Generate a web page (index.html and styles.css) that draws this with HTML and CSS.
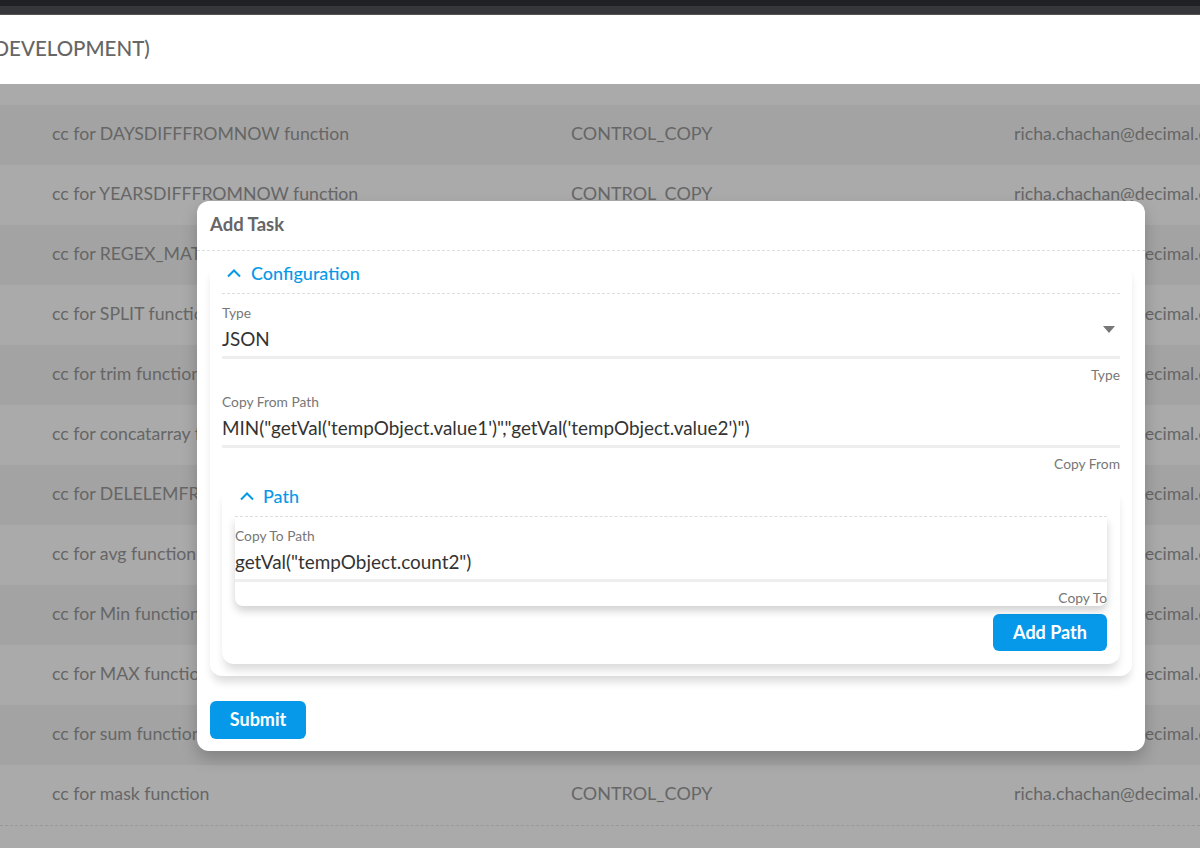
FILE: index.html
```html
<!DOCTYPE html>
<html lang="en">
<head>
  <meta charset="UTF-8">
  <title>Tasks</title>
  <link rel="stylesheet" href="styles.css">
</head>
<body>

<div class="top-bar"></div>
<div class="page-title">(DEVELOPMENT)</div>

<div class="task-table">
  <div class="task-row"><span class="col-name">cc for DAYSDIFFFROMNOW function</span><span class="col-type">CONTROL_COPY</span><span class="col-owner">richa.chachan@decimal.com</span></div>
  <div class="task-row"><span class="col-name">cc for YEARSDIFFFROMNOW function</span><span class="col-type">CONTROL_COPY</span><span class="col-owner">richa.chachan@decimal.com</span></div>
  <div class="task-row"><span class="col-name">cc for REGEX_MATCH function</span><span class="col-type">CONTROL_COPY</span><span class="col-owner">richa.chachan@decimal.com</span></div>
  <div class="task-row"><span class="col-name">cc for SPLIT function</span><span class="col-type">CONTROL_COPY</span><span class="col-owner">richa.chachan@decimal.com</span></div>
  <div class="task-row"><span class="col-name">cc for trim function</span><span class="col-type">CONTROL_COPY</span><span class="col-owner">richa.chachan@decimal.com</span></div>
  <div class="task-row"><span class="col-name">cc for concatarray function</span><span class="col-type">CONTROL_COPY</span><span class="col-owner">richa.chachan@decimal.com</span></div>
  <div class="task-row"><span class="col-name">cc for DELELEMFROMARRAY function</span><span class="col-type">CONTROL_COPY</span><span class="col-owner">richa.chachan@decimal.com</span></div>
  <div class="task-row"><span class="col-name">cc for avg function</span><span class="col-type">CONTROL_COPY</span><span class="col-owner">richa.chachan@decimal.com</span></div>
  <div class="task-row"><span class="col-name">cc for Min function</span><span class="col-type">CONTROL_COPY</span><span class="col-owner">richa.chachan@decimal.com</span></div>
  <div class="task-row"><span class="col-name">cc for MAX function</span><span class="col-type">CONTROL_COPY</span><span class="col-owner">richa.chachan@decimal.com</span></div>
  <div class="task-row"><span class="col-name">cc for sum function</span><span class="col-type">CONTROL_COPY</span><span class="col-owner">richa.chachan@decimal.com</span></div>
  <div class="task-row"><span class="col-name">cc for mask function</span><span class="col-type">CONTROL_COPY</span><span class="col-owner">richa.chachan@decimal.com</span></div>
</div>

<div class="modal">
  <div class="modal-title">Add Task</div>
  <div class="modal-body">
    <div class="panel">
      <div class="panel-head">
        <svg class="chevron" width="16" height="10" viewBox="0 0 16 10"><path d="M2 8.5 8 2.5l6 6" fill="none" stroke="currentColor" stroke-width="2"/></svg>
        <span>Configuration</span>
      </div>
      <div class="field">
        <label>Type</label>
        <div class="field-value">JSON<span class="caret"></span></div>
        <div class="helper">Type</div>
      </div>
      <div class="field">
        <label>Copy From Path</label>
        <div class="field-value">MIN("getVal('tempObject.value1')","getVal('tempObject.value2')")</div>
        <div class="helper">Copy From</div>
      </div>

      <div class="panel panel-nested">
        <div class="panel-head">
          <svg class="chevron" width="16" height="10" viewBox="0 0 16 10"><path d="M2 8.5 8 2.5l6 6" fill="none" stroke="currentColor" stroke-width="2"/></svg>
          <span>Path</span>
        </div>
        <div class="path-item">
          <div class="field">
            <label>Copy To Path</label>
            <div class="field-value">getVal("tempObject.count2")</div>
            <div class="helper">Copy To</div>
          </div>
        </div>
        <div class="panel-actions">
          <button class="btn btn-add">Add Path</button>
        </div>
      </div>
    </div>
    <button class="btn btn-submit">Submit</button>
  </div>
</div>

</body>
</html>
```

FILE: styles.css
```css
* {
  box-sizing: border-box;
  margin: 0;
  padding: 0;
}

body {
  font-family: Lato, "Open Sans", sans-serif;
  background: #aaa;
  height: 848px;
  overflow: hidden;
  position: relative;
}

.top-bar {
  height: 15px;
  background: #36373a;
  border-top: 6px solid #202124;
  border-bottom: 1px solid #555;
}

.page-title {
  height: 69px;
  background: #fff;
  color: #666;
  font-size: 20.5px;
  font-weight: 500;
  line-height: 67px;
  margin-left: -12px;
  white-space: nowrap;
}

.task-table {
  padding-top: 21px;
  border-bottom: 1px dashed #999;
  height: 742px;
}

.task-row {
  height: 60px;
  display: flex;
  align-items: center;
  padding-bottom: 4px;
  color: #666;
  font-size: 17.7px;
  white-space: nowrap;
  background: #aaa;
}

.task-row:nth-child(odd) {
  background: #a3a3a3;
}

.col-name {
  flex: none;
  width: 571px;
  padding-left: 52px;
}

.col-type {
  flex: none;
  width: 443px;
  font-size: 18px;
}

.col-owner {
  flex: none;
}

/* dialog on top of the dimmed table */
.modal {
  position: absolute;
  left: 197px;
  top: 201px;
  width: 948px;
  height: 550px;
  background: #fff;
  border-radius: 12px;
  box-shadow: 0 8px 16px rgba(0, 0, 0, 0.2);
}

.modal-title {
  height: 50px;
  padding-left: 13px;
  border-bottom: 1px dashed #ddd;
  color: #666;
  font-size: 18.5px;
  font-weight: 700;
  line-height: 46px;
}

.modal-body {
  padding: 11px 13px 0;
}

.panel {
  background: #fff;
  padding: 0 12px 12px;
  border-radius: 12px;
  box-shadow: 0 8px 8px -2px rgba(0, 0, 0, 0.14);
  height: 414px;
}

.panel-nested {
  height: 178px;
  padding: 0 13px 0;
  margin-top: 14px;
}

.panel-head {
  height: 32px;
  display: flex;
  align-items: center;
  gap: 9px;
  padding: 0 0 10px 4px;
  border-bottom: 1px dashed #ddd;
  color: #0799e9;
  font-size: 18px;
  font-weight: 500;
}

.panel-nested .panel-head {
  height: 31px;
  gap: 8px;
  padding-bottom: 10px;
}

.field {
  display: flex;
  flex-direction: column;
  height: 89px;
  padding-top: 10px;
}

.field label {
  color: #777;
  font-size: 13.8px;
  line-height: 17px;
  margin-bottom: 1px;
}

.field-value {
  position: relative;
  height: 38px;
  margin-bottom: 7px;
  padding-top: 5px;
  color: #333;
  font-size: 18.9px;
  line-height: 24px;
  white-space: nowrap;
  border-bottom: 3px solid #eee;
}

.caret {
  position: absolute;
  right: 5px;
  top: 4px;
  border-left: 6px solid transparent;
  border-right: 6px solid transparent;
  border-top: 7px solid #777;
}

.helper {
  color: #777;
  font-size: 13.8px;
  line-height: 17px;
  text-align: right;
}

.path-item {
  height: 89px;
  border-radius: 0 0 8px 8px;
  box-shadow: 0 5px 8px rgba(0, 0, 0, 0.18);
  clip-path: inset(0 -20px -20px -20px);
}

.panel-actions {
  display: flex;
  justify-content: flex-end;
  padding-top: 8px;
}

.btn {
  border: none;
  border-radius: 6px;
  background: #0799e9;
  color: #fff;
  font-family: inherit;
  font-size: 18px;
  font-weight: 700;
  padding-bottom: 2px;
}

.btn-add {
  width: 114px;
  height: 37px;
}

.btn-submit {
  width: 96px;
  height: 38px;
  margin-top: 25px;
}
```
